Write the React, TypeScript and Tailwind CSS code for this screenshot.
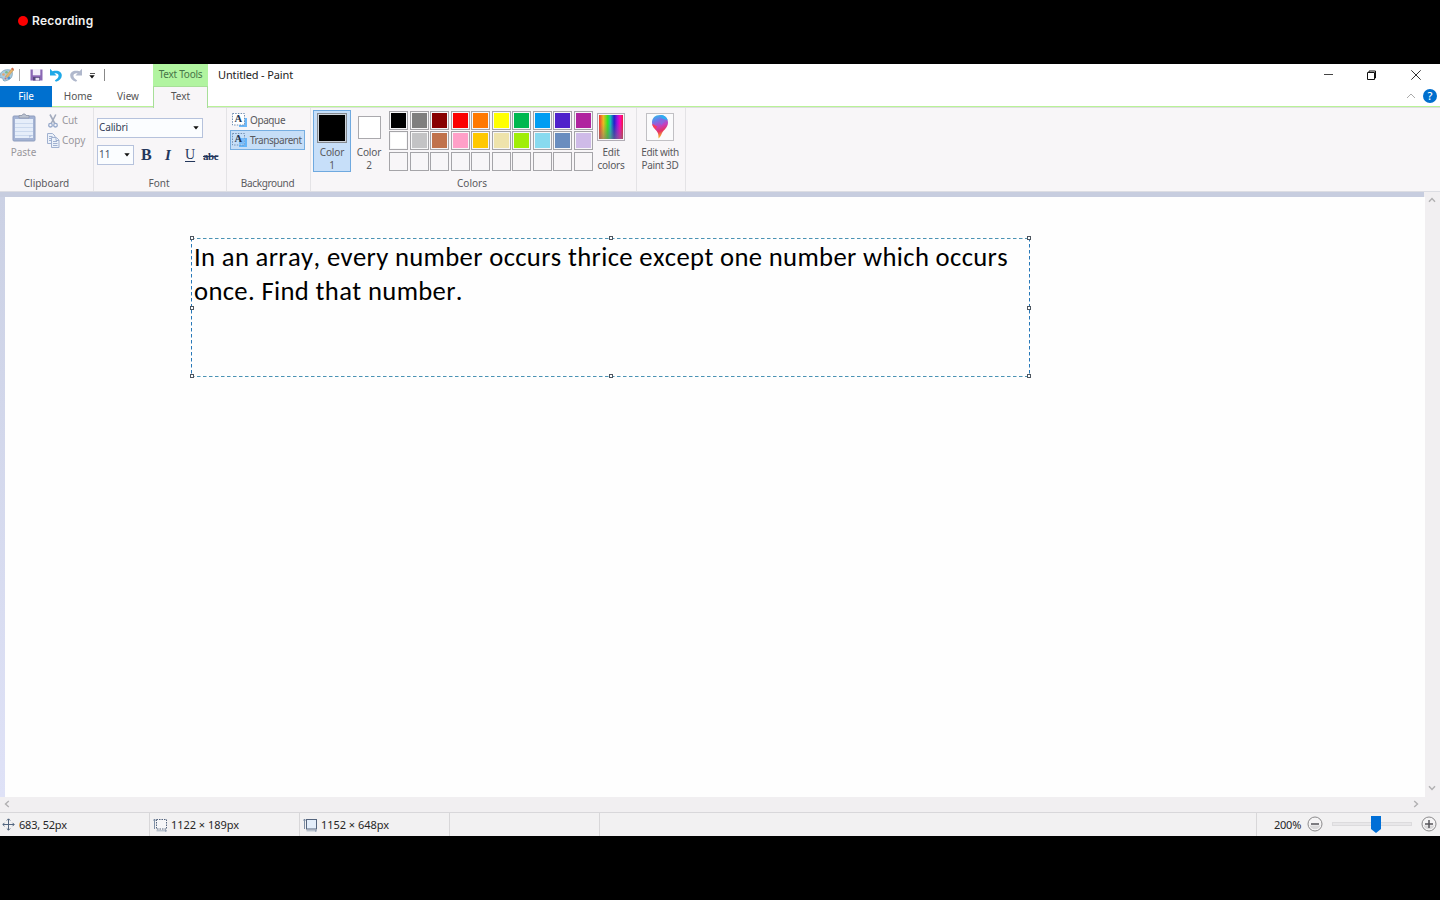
import React from "react";

const ui = "font-['Noto_Sans','Open_Sans',sans-serif]";

const rows: string[][] = [
  ["bg-black", "bg-[#7f7f7f]", "bg-[#880000]", "bg-[#fb0000]", "bg-[#ff7800]", "bg-[#ffff00]", "bg-[#00b84f]", "bg-[#009df2]", "bg-[#4f22cb]", "bg-[#b0259f]"],
  ["bg-white", "bg-[#c3c3c5]", "bg-[#c0724c]", "bg-[#ffa0c8]", "bg-[#ffc800]", "bg-[#eee3ab]", "bg-[#a0ee08]", "bg-[#88daef]", "bg-[#6a8dbf]", "bg-[#cfbbe8]"],
  Array(10).fill("bg-[#f8f6f8]"),
];

function Caption({ children, className = "" }: { children: React.ReactNode; className?: string }) {
  return <div className={`mt-auto mb-[1px] h-[14px] text-center text-[10px] leading-[14px] text-[#5a5a5e] ${className}`}>{children}</div>;
}

function PaintLogo() {
  return (
    <svg width="15" height="16" viewBox="1 0 15 16" className="shrink-0">
      <path d="M1 8C2 4 6 2 11 3c3 1 3 5 1 8-2 2-5 3-7 3-2-1 0-3-2-3-2 0-3-1-2-3z" fill="#a9cbe0" stroke="#7d9fb5" strokeWidth=".8" />
      <circle cx="4.500" cy="7.500" r="1.300" fill="#e9a46d" />
      <circle cx="7.500" cy="5.200" r="1.300" fill="#79bd8c" />
      <circle cx="9.800" cy="11" r="1.400" fill="#4a94d8" />
      <circle cx="6.500" cy="11.500" r="1" fill="#b6728b" />
      <path d="M6.500 9.500 12.500 2l2 1.200-6 7.300z" fill="#e7b36b" stroke="#b99c62" strokeWidth=".6" />
      <path d="m12 2 1.300-1.400L15 2l-.6 1.600z" fill="#cf6a47" />
    </svg>
  );
}

function SaveIcon() {
  return (
    <svg width="13" height="12" viewBox="0 0 13 12" className="shrink-0">
      <path d="M.5.5h12v11H.5z" fill="#8a68b4" />
      <path d="M2.800 0h7.500v6.300H2.800z" fill="#f3effa" />
      <path d="M3 8h7v3.500H3z" fill="#5a4880" />
      <path d="M5.500 8.800h3.800v2.700H5.500z" fill="#e7e2f2" />
    </svg>
  );
}

function TurnIcon({ color, flip = false }: { color: string; flip?: boolean }) {
  return (
    <svg width="14" height="14" viewBox="0 0 14 14" className={`shrink-0 ${flip ? "-scale-x-100" : ""}`}>
      <path d="M1 .8v6.700h6.600L5.300 5.300c2.500-.6 4.300.5 4.300 2.500 0 1.800-1.500 3.200-3.800 4.700l1.200 1.200c3.600-1.300 5.800-3.500 5.800-6.300 0-3.600-4-5.600-9.300-4.100z" fill={color} />
    </svg>
  );
}

function Clipboard() {
  return (
    <svg width="24" height="29" viewBox="0 0 24 29">
      <rect x="1" y="3" width="22" height="25" rx="1" fill="#a4b3d4" stroke="#8f9ebf" />
      <path d="M3 6h18v19H3z" fill="#e6eefa" />
      <path d="M3 10.500h18M3 14.500h18M3 18.500h18M3 22.500h18" stroke="#cbd9ee" />
      <path d="M7 5V2.500h3L11 1h2l1 1.500h3V5z" fill="#bcc3d1" stroke="#8d96a8" strokeWidth=".8" />
      <path d="M17 25v-3h4" fill="#bac9e4" />
    </svg>
  );
}

function Scissors() {
  return (
    <svg width="10" height="14" viewBox="0 0 10 14" fill="none">
      <path d="m2 .5 4.800 9M7.800.5 3.200 9.500" stroke="#a3abbd" strokeWidth="1.600" />
      <circle cx="2.500" cy="11.200" r="1.800" stroke="#97a9cb" strokeWidth="1.300" />
      <circle cx="7.500" cy="11.200" r="1.800" stroke="#97a9cb" strokeWidth="1.300" />
    </svg>
  );
}

function CopyIcon() {
  return (
    <svg width="13" height="15" viewBox="0 0 13 15" fill="#edf2fa" stroke="#a1b1d0">
      <path d="M.5.5h5l2.500 2.500V10.500H.5z" />
      <path d="M2 3.500h3.500M2 5.500h3M2 7.500h3" />
      <path d="M4.500 4.500h5l2.500 2.500v7.500H4.500z" />
      <path d="M9 4.500v3h3M6 8.500h4M6 10.500h4.500M6 12.500h4.500" />
    </svg>
  );
}

function BgIcon({ clear = false }: { clear?: boolean }) {
  return (
    <svg width="16" height="15" viewBox="0 0 16 15" className="shrink-0">
      <path d="M7 5h8v9H7z" fill={clear ? "#62b4fa" : "#6bb8fa"} />
      <rect x=".5" y=".5" width="12" height="11.500" fill={clear ? "#c5dff9" : "#fff"} stroke="#7391b4" strokeDasharray="1.500 1.200" />
      {clear && <path d="M7 5h5.500v6.500H7z" fill="#7abcf8" />}
      <text x="2.600" y="9.300" fontFamily="Liberation Serif, serif" fontWeight="700" fontSize="10.500" fill="#243550">A</text>
    </svg>
  );
}

function Arrow() {
  return <svg width="6" height="4" viewBox="0 0 6 4" className="shrink-0"><path d="M.3.3h5.400L3 3.400z" fill="#111" /></svg>;
}

function Chevron({ className = "" }: { className?: string }) {
  return (
    <svg width="8" height="6" viewBox="0 0 8 6" className={className} fill="none">
      <path d="m1 4.800 3-3.300 3 3.300" stroke="#b1b0b2" strokeWidth="1.400" />
    </svg>
  );
}

function Balloon() {
  return (
    <svg width="18" height="26" viewBox="0 0 18 26">
      <defs>
        <linearGradient id="drop" x1="0" y1="0" x2=".25" y2="1">
          <stop offset="0" stopColor="#23c8ec" />
          <stop offset=".3" stopColor="#6f78e8" />
          <stop offset=".55" stopColor="#c43fc1" />
          <stop offset=".77" stopColor="#e73262" />
          <stop offset="1" stopColor="#f6b32f" />
        </linearGradient>
      </defs>
      <path d="M9 1c5 0 8 3 8 7.500 0 5-4.500 7.500-6 10.500-.8 2-1.500 4-3.500 5.500 0-2 0-4-.8-5.700C5.300 15.500 1 13.500 1 8.500 1 4 4 1 9 1z" fill="url(#drop)" />
      <path d="M9 1c4 0 7 2 7.700 5.500-2-1.500-3-1-4.700-1.800C10 4 10 2 9 1z" fill="#2eaef0" />
      <path d="M1.300 10c2 .5 3 2 5 2.500-1 1-1 2-1.500 3C3 14 1.500 12.500 1.300 10z" fill="#fa3d59" />
      <path d="M9 5c2 1 4 0 5 2-1 2-2.500 1-3 4-2-1-3-4-2-6z" fill="#8b65df" />
    </svg>
  );
}

function MoveIcon() {
  return (
    <svg width="13" height="13" viewBox="0 0 13 13" fill="none" stroke="#52657f">
      <path d="M6.500 1v11M1 6.500h11M4.800 2.500l1.700-1.700 1.700 1.700M4.800 10.500l1.700 1.700 1.700-1.700M2.500 4.800.8 6.500l1.700 1.700M10.500 4.800l1.700 1.700-1.700 1.700" />
    </svg>
  );
}

function SizeIcon({ dashed = false }: { dashed?: boolean }) {
  return (
    <svg width="15" height="14" viewBox="0 0 15 14" fill="none">
      <rect x="3.500" y="1.500" width="10" height="9.500" fill={dashed ? "#f6f6f8" : "#e4eefa"} stroke="#55657e" strokeDasharray={dashed ? "1.500 1" : undefined} />
      <path d="M1.500 1v10M.5 2.500l1-1.500 1 1.500" stroke="#71839d" strokeWidth=".9" />
      <path d="M3.500 12.800h10M12 12l1.500.8-1.500.8" stroke="#8091aa" strokeWidth=".7" />
    </svg>
  );
}

function ZoomButton({ plus = false }: { plus?: boolean }) {
  return (
    <svg width="16" height="16" viewBox="0 0 16 16" className="shrink-0">
      <circle cx="8" cy="8" r="7" fill="#f5f4f5" stroke="#8b8a8c" />
      <path d="M2.500 9.500h11A6 6 0 0 1 2.500 9.500z" fill="#d9d8d9" />
      <path d={plus ? "M4 8h8M8 4v8" : "M4 8h8"} stroke="#555459" strokeWidth="1.500" />
    </svg>
  );
}

const handles = [
  "-left-[1px] -top-[2px]", "left-[418px] -top-[2px]", "-right-[1px] -top-[2px]",
  "-left-[1px] top-[68px]", "-right-[1px] top-[68px]",
  "-left-[1px] -bottom-[1px]", "left-[418px] -bottom-[1px]", "-right-[1px] -bottom-[1px]",
];

export default function App() {
  return (
    <div className={`flex h-[900px] w-[1440px] flex-col overflow-hidden bg-black whitespace-nowrap ${ui}`}>
      <div className="flex h-[64px] shrink-0 items-start pt-[14px] pl-[18px]">
        <span className="mt-[2px] size-[10px] rounded-full bg-[#fb0000]" />
        <span className="ml-1 font-['Inter',sans-serif] text-[12px] leading-[14px] font-semibold tracking-[0.270px] text-[#f2f2f2]">Recording</span>
      </div>

      <header className="flex h-[22px] shrink-0 bg-white">
        <div className="flex w-[153px] items-center">
          <PaintLogo />
          <span className="ml-[4px] h-3 w-px bg-[#aaa]" />
          <span className="ml-[10px]"><SaveIcon /></span>
          <span className="ml-[6px]"><TurnIcon color="#1ea9e8" /></span>
          <span className="ml-[6px]"><TurnIcon color="#b0b8cc" flip /></span>
          <span className="ml-[6px] flex flex-col items-center gap-px pt-[2px]"><i className="h-px w-[5px] bg-[#555]" /><Arrow /></span>
          <span className="ml-[9px] h-3 w-px bg-[#888]" />
        </div>
        <div className="w-[55px] bg-[#b1f4a0] text-center text-[10px] leading-[21px] tracking-[-0.250px] text-[#477548]">Text Tools</div>
        <div className="ml-[10px] text-[11px] leading-[22px] tracking-[-0.130px] text-[#222]">Untitled - Paint</div>
        <div className="ml-auto flex items-center">
          <svg width="10" height="10" viewBox="0 0 10 10"><path d="M0 4.500h9" stroke="#444" /></svg>
          <svg width="11" height="11" viewBox="0 0 11 11" className="ml-[32px]" fill="none" stroke="#111"><path d="M1.500 2.500h7v7h-7zM3 2V1h6.500v7H9" /></svg>
          <svg width="11" height="11" viewBox="0 0 11 11" className="mr-[18px] ml-[34px]" fill="none" stroke="#333"><path d="m.3.300 9.400 9.400m0-9.400L.3 9.700" /></svg>
        </div>
      </header>

      <nav className="flex h-[22px] shrink-0 border-b border-[#dddfdd] bg-white text-[10px] leading-[21px] text-[#555]">
        <div className="w-[52px] bg-[#0070cf] text-center tracking-[-0.100px] text-white">File</div>
        <div className="w-[52px] border-b border-[#b9f298] text-center">Home</div>
        <div className="w-[49px] border-b border-[#b9f298] pr-px text-center">View</div>
        <div className="-mb-px w-[55px] border-x border-t border-[#a7df98] bg-[#f8f6f8] text-center leading-[19px]">Text</div>
        <div className="flex grow items-center justify-end border-b border-[#b9f298] pr-[3px]">
          <svg width="10" height="6" viewBox="0 0 10 6" fill="none" stroke="#aaa"><path d="m1 5 4-4 4 4" /></svg>
          <span className="ml-[7px] flex size-[14px] items-center justify-center rounded-full bg-[#006fce] text-[11px] leading-[14px] font-medium text-white">?</span>
        </div>
      </nav>

      <section className="flex h-[84px] shrink-0 border-b border-[#dcdde3] bg-[#f8f6f8] text-[10px] text-[#59595d]">
        <div className="flex w-[94px] flex-col border-r border-[#e4e3e6]">
          <div className="flex">
            <div className="flex w-[47px] flex-col items-center pt-[5px] text-[#98979c]">
              <Clipboard /><span className="mt-[3px] leading-[14px]">Paste</span>
            </div>
            <div className="flex flex-col pt-[5px] text-[#98979c]">
              <div className="flex h-[15px] items-center"><span className="flex w-[15px] pl-px"><Scissors /></span><span className="tracking-[-0.200px]">Cut</span></div>
              <div className="mt-[5px] flex h-[15px] items-center"><span className="w-[15px]"><CopyIcon /></span>Copy</div>
            </div>
          </div>
          <Caption>Clipboard</Caption>
        </div>

        <div className="flex w-[133px] flex-col border-r border-[#e4e3e6]">
          <div className="mt-[10px] ml-[3px] flex h-5 w-[106px] items-center justify-between border border-[#b6c2dc] bg-[#fbfdff] pr-[3px] pl-px leading-[18px] text-[#363f59]"><span className="-mt-[2px] tracking-[-0.150px]">Calibri</span><Arrow /></div>
          <div className="mt-[7px] ml-[3px] flex h-5 items-center text-[#24375c]">
            <div className="flex h-5 w-[37px] items-center justify-between border border-[#b6c2dc] bg-[#fbfdff] pr-[3px] pl-px leading-[18px] text-[#4a5163]"><span className="-mt-[2px]">11</span><Arrow /></div>
            <div className="flex items-center font-['Liberation_Serif',serif] leading-5">
              <b className="ml-[7px] w-[12px] text-[16px]">B</b>
              <i className="ml-[12px] w-[8px] text-[15px] font-semibold">I</i>
              <span className="-mt-px ml-[12px] w-[11px] text-[14px] underline underline-offset-2">U</span>
              <b className="mt-[2px] ml-[7px] text-[11px] tracking-[-0.400px] line-through">abc</b>
            </div>
          </div>
          <Caption className="pr-[2px]">Font</Caption>
        </div>

        <div className="flex w-[84px] flex-col border-r border-[#e4e3e6]">
          <div className="mt-[3px] ml-[3px] flex h-[19px] items-center pl-[2px]"><BgIcon /><span className="ml-[2px] tracking-[-0.400px]">Opaque</span></div>
          <div className="ml-[3px] flex h-5 w-[75px] items-center border border-[#76aee1] bg-[#c6def7] pl-px"><BgIcon clear /><span className="ml-[2px] tracking-[-0.450px]">Transparent</span></div>
          <Caption className="pr-[2px] tracking-[-0.350px]">Background</Caption>
        </div>

        <div className="flex w-[326px] flex-col border-r border-[#e4e3e6]">
          <div className="flex">
            <div className="mt-[2px] ml-[2px] flex h-[62px] w-[38px] flex-col items-center border border-[#6fa9df] bg-[#c7dff9] pt-[2px]">
              <div className="size-[30px] border border-[#858a91] bg-black outline-1 -outline-offset-2 outline-[#cdd3da]" />
              <div className="mt-[3px] text-center leading-[12.500px] tracking-[-0.100px]">Color<br />1</div>
            </div>
            <div className="flex w-[38px] flex-col items-center pt-[8px] pr-[2px]">
              <div className="size-[23px] border border-[#aaa9ad] bg-white" />
              <div className="mt-[7px] text-center leading-[12.500px] tracking-[-0.100px]">Color<br />2</div>
            </div>
            <div className="mt-[3px] flex flex-col gap-[1.400px]">
              {rows.map((row, y) => (
                <div key={y} className="flex gap-[1.500px]">
                  {row.map((c, x) => <div key={x} className="size-[19px] border border-[#a5a4a8] bg-[#f7f7f8] p-px"><div className={`size-full ${c}`} /></div>)}
                </div>
              ))}
            </div>
            <div className="ml-[0.500px] flex w-[36px] flex-col items-center pt-[5px]">
              <div className="size-[28px] border border-[#b1adb5] p-px">
                <div className="size-full bg-[linear-gradient(to_bottom,transparent_35%,#77777799),linear-gradient(to_right,#ef3434,#eebb20_18%,#34e424_36%,#16bcb5_48%,#1c23c9_63%,#9912de_76%,#ff05b5_88%,#ed1c3b)]" />
              </div>
              <div className="mt-[5px] text-center leading-[12.500px] tracking-[-0.200px]">Edit<br />colors</div>
            </div>
          </div>
          <Caption className="pr-[3px]">Colors</Caption>
        </div>

        <div className="flex w-[49px] flex-col items-center border-r border-[#e4e3e6] pt-[5px] pr-[2px]">
          <div className="flex size-[28px] items-center justify-center border border-[#c1c0c4] bg-[#fbfbfc]"><Balloon /></div>
          <div className="mt-[5px] text-center leading-[12.500px] tracking-[-0.350px]">Edit with<br />Paint 3D</div>
        </div>
      </section>

      <main className="flex h-[605px] shrink-0 bg-[#f1eff1]">
        <div className="flex w-[1425px] flex-col">
          <div className="mr-px h-[5px] bg-[#c7cddf]" />
          <div className="flex h-[600px]">
            <div className="w-[5px] bg-[linear-gradient(to_bottom,#cbd1e4,#dfe2f7)]" />
            <div className="grow bg-[#fefefe] pt-[41px] pl-[186px]">
              <div className="relative h-[139px] w-[839px]">
                <svg width="839" height="139" viewBox="0 0 839 139" className="absolute inset-0" fill="none" strokeDasharray="3.500 2.500">
                  <path d="M0 .5h839M0 138.500h839" stroke="#4b93b4" />
                  <path d="M.5 0v139M838.500 0v139" stroke="#2878b8" />
                </svg>
                {handles.map((h) => <span key={h} className={`absolute size-[4px] border border-[#4e5660] bg-white ${h}`} />)}
                <div className="relative pt-[3px] pl-[3px] font-['Carlito','Lato',sans-serif] text-[26.670px] leading-[33.500px] tracking-[0.345px] text-black [font-kerning:none]">
                  In an array, every number occurs thrice except one number which occurs<br />once. Find that number.
                </div>
              </div>
            </div>
          </div>
        </div>
        <div className="flex w-[15px] flex-col items-center justify-between bg-[#f1eff1] pt-[5px] pr-px pb-[6px]">
          <Chevron /><Chevron className="rotate-180" />
        </div>
      </main>

      <div className="flex h-[15px] shrink-0 items-center justify-between bg-[#f1eff1] pr-[20px] pb-px pl-[3px]">
        <Chevron className="-rotate-90" /><Chevron className="rotate-90" />
      </div>

      <footer className="flex h-6 shrink-0 border-t border-[#d8d7da] bg-[#f2f1f2] text-[11px] text-[#262626]">
        <div className="flex w-[150px] items-center border-r border-[#d8d7d9] pl-[2px]"><MoveIcon /><span className="mt-[2px] ml-1 tracking-[-0.200px]">683, 52px</span></div>
        <div className="flex w-[150px] items-center border-r border-[#d8d7d9] pl-[3px]"><SizeIcon dashed /><span className="mt-[2px] ml-[3px] tracking-[-0.040px]">1122 × 189px</span></div>
        <div className="flex w-[150px] items-center border-r border-[#d8d7d9] pl-[3px]"><SizeIcon /><span className="mt-[2px] ml-[3px] tracking-[-0.040px]">1152 × 648px</span></div>
        <div className="w-[150px] border-r border-[#d8d7d9]" />
        <div className="w-[657px] border-r border-[#d8d7d9]" />
        <div className="flex grow items-center pb-px">
          <span className="mt-[3px] ml-[17px] w-[33px] tracking-[-0.250px]">200%</span>
          <ZoomButton />
          <div className="relative ml-[9px] h-[4px] w-[80px] border border-[#dcdbdd] bg-[#e8e7e9]">
            <svg width="10" height="17" viewBox="0 0 10 17" className="absolute -top-[7px] left-[38px]"><path d="M0 0h10v13l-5 4-5-4z" fill="#006fd7" /></svg>
          </div>
          <span className="ml-[9px]"><ZoomButton plus /></span>
        </div>
      </footer>
    </div>
  );
}
